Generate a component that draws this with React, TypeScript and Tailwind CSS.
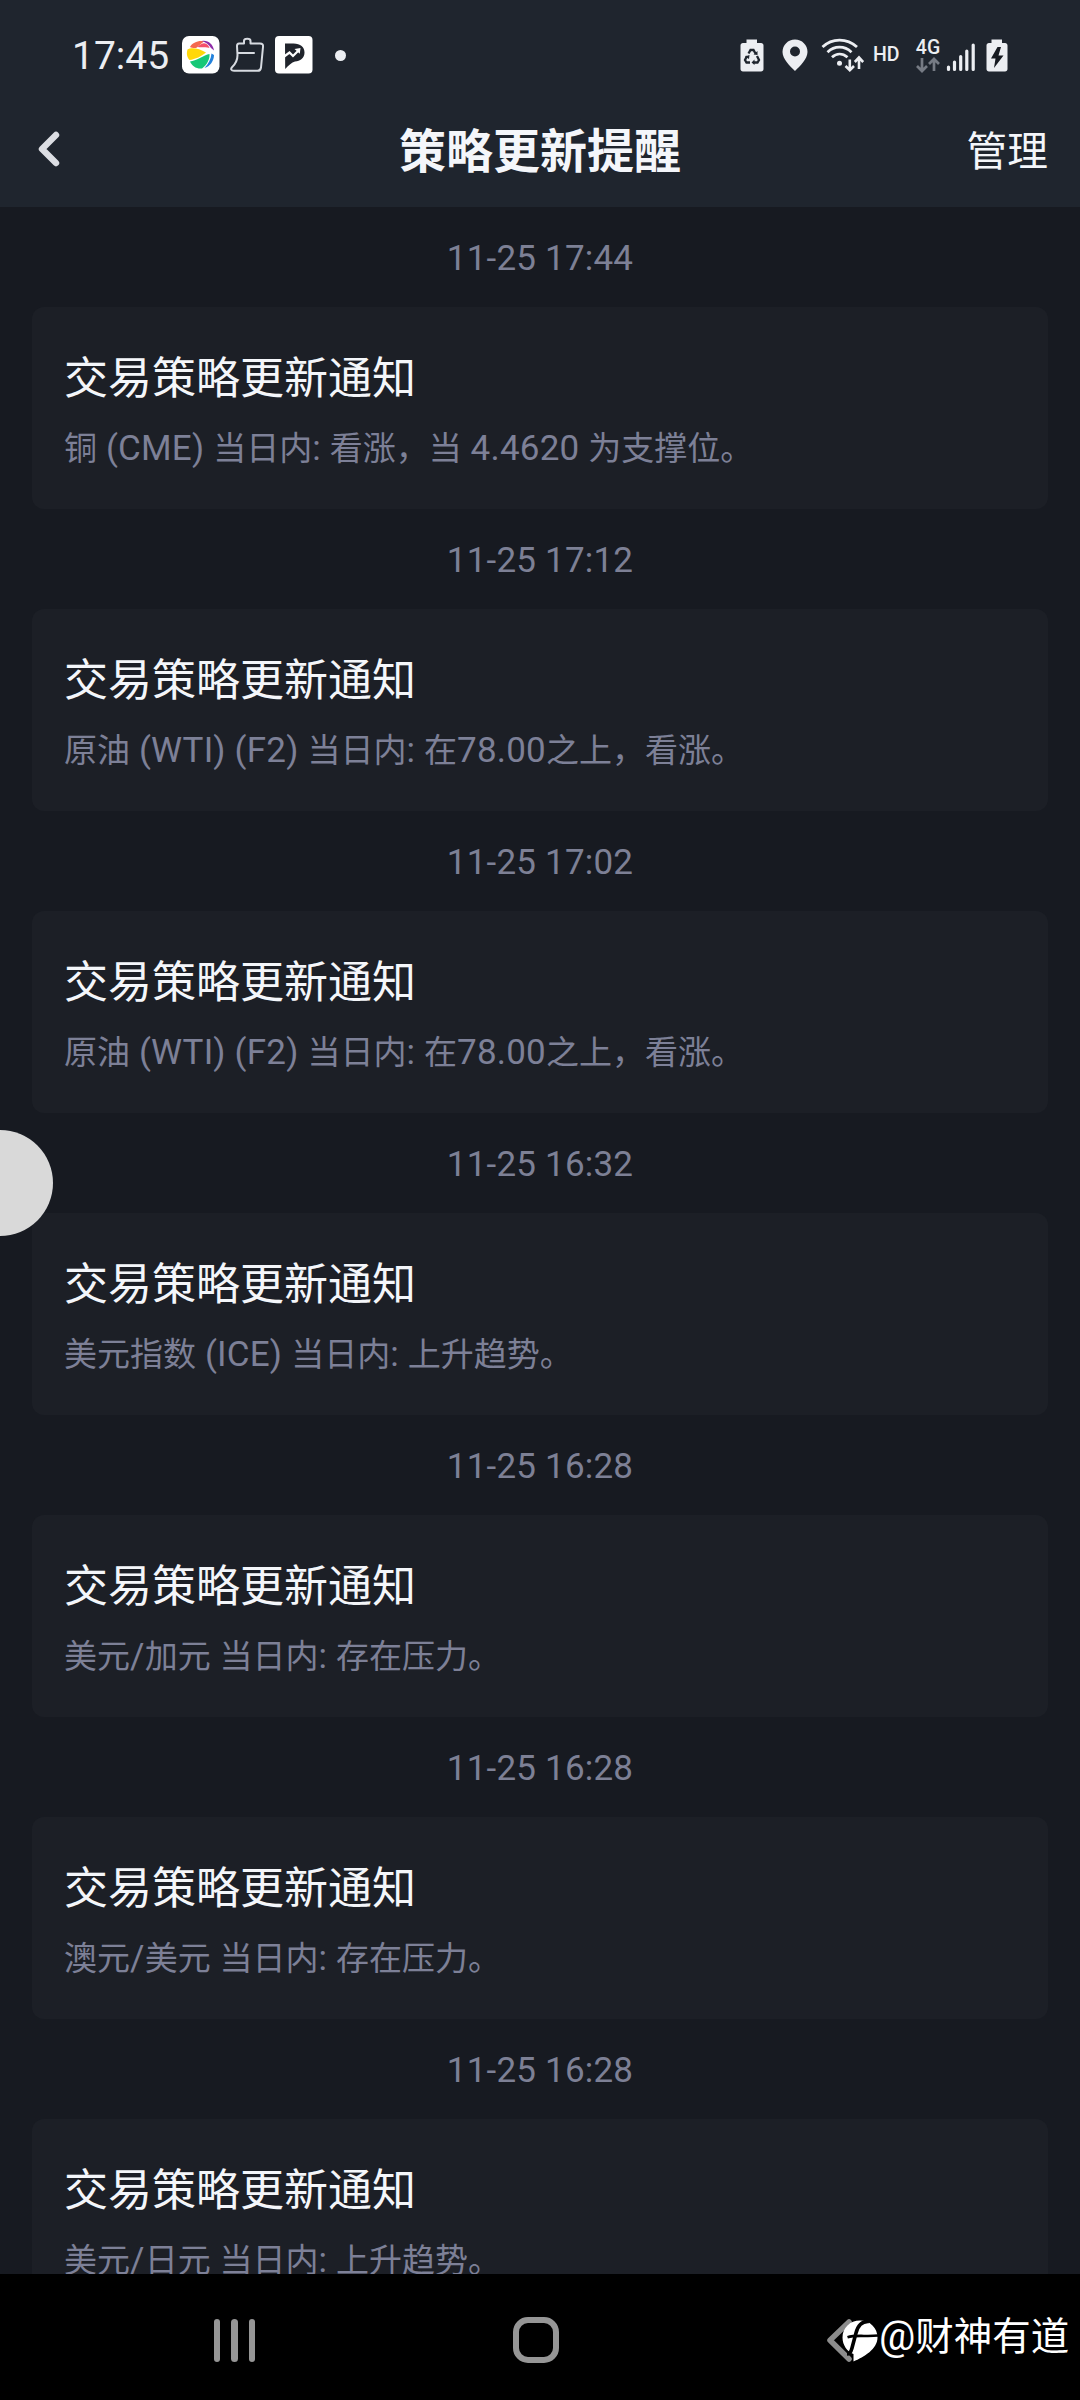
import React from 'react';

type Notice = { time: string; text: string };

const notices: Notice[] = [
  { time: '11-25 17:44', text: '铜 (CME) 当日内: 看涨，当 4.4620 为支撑位。' },
  { time: '11-25 17:12', text: '原油 (WTI) (F2) 当日内: 在78.00之上，看涨。' },
  { time: '11-25 17:02', text: '原油 (WTI) (F2) 当日内: 在78.00之上，看涨。' },
  { time: '11-25 16:32', text: '美元指数 (ICE) 当日内: 上升趋势。' },
  { time: '11-25 16:28', text: '美元/加元 当日内: 存在压力。' },
  { time: '11-25 16:28', text: '澳元/美元 当日内: 存在压力。' },
  { time: '11-25 16:28', text: '美元/日元 当日内: 上升趋势。' },
];

/* Latin runs are set slightly larger than the Chinese characters around them. */
function MixedText({ text }: { text: string }) {
  const runs = text.match(/[\x20-\x7e]+|[^\x20-\x7e]+/g) ?? [];
  return (
    <>
      {runs.map((run, i) =>
        /^[\x20-\x7e]/.test(run) ? (
          <span key={i} className="text-[35px] tracking-[0.2px]">{run}</span>
        ) : (
          <span key={i}>{run}</span>
        ),
      )}
    </>
  );
}

function StatusBar() {
  return (
    <div className="flex h-[110px] items-center pl-[72px] pr-[72px] text-[#eceef2]">
      <span className="w-[110px] pt-[3px] text-[39px] leading-none">17:45</span>
      <svg className="h-[38px] w-[38px] shrink-0" viewBox="0 0 38 38">
        <rect x="0" y="0" width="37.5" height="37.5" rx="7" fill="#fff" />
        <path d="M8 11C10 7 17 4 22 5.500C20 7 17 9 15 11.500C13 12.500 10 12 8 11Z" fill="#f4694f" />
        <path d="M20 5C26 4 31 8 32 14.500L29 12C27 8.500 24 6.500 20 5Z" fill="#8f2da8" />
        <path d="M15.500 11C19 7 22.500 6.500 24.500 8C26 9 27 10.500 27.500 12C24 10.500 20 12 15.500 11Z" fill="#f5506b" />
        <path d="M5.500 13.500C9 11 17 12 24 16.500C20 20 13 23.500 7.500 24C4.500 21 4.500 17 5.500 13.500Z" fill="#ffd80a" />
        <path d="M8 25.500C14 25 22 19 27.500 18C28 23 25 29 20 32.500C14 33 10 30 8 25.500Z" fill="#17c877" />
        <path d="M29.500 17.500L32 19C32 25 28 30.500 22.500 32C26.500 28 29 23 29.500 17.500Z" fill="#2382dc" />
      </svg>
      <svg className="ml-[10px] h-[38px] w-[36px] shrink-0" viewBox="0 0 36 38" fill="none" stroke="#d7dbe1" strokeWidth="2" strokeLinejoin="round" strokeLinecap="round">
        <path d="M9 7.500H14V5C14 2 20.500 2 20.500 5V7.500H30C32.500 7.500 33.300 8.500 33 11L31 31.500C30.700 33.800 29.800 34.800 27.500 34.800H4C1 34.800.500 32.800 2 31.200C5.500 28 7.500 24 7.500 19L7 10C7 8.300 7.500 7.500 9 7.500Z" />
        <path d="M8 17H24" />
      </svg>
      <svg className="ml-[9px] h-[38px] w-[38px] shrink-0" viewBox="0 0 38 38">
        <rect x="0" y="0" width="37.500" height="37.500" rx="4" fill="#fff" />
        <path d="M10 7.500H18.500C25.500 7.500 29.500 11 29.500 16.500C29.500 22.500 25 25 20 25.500C16.500 26.500 14 29 10.200 33Z" fill="#20242c" />
        <path d="M8.500 21L14.500 16.500L18 20L23.500 14.500" fill="none" stroke="#fff" strokeWidth="2.200" />
        <path d="M19.500 13L25.500 12L24.800 17.800Z" fill="#fff" />
      </svg>
      <span className="ml-[22px] size-[11px] rounded-full bg-[#eceef2]" />

      <div className="ml-auto flex items-center">
        <svg className="h-[34px] w-[24px]" viewBox="0 0 24 34" fill="#eceef2">
          <path d="M6.500 1.500H17V5H21C22.500 5 23.500 6 23.500 7.500V31C23.500 32.500 22.500 33.500 21 33.500H3C1.500 33.500.5 32.500.5 31V7.500C.5 6 1.500 5 3 5H6.500Z" />
          <g fill="none" stroke="#1f252e" strokeWidth="2.300">
            <path d="M8.500 15.500L10.500 12H13.500L15.500 15.500" />
            <path d="M17 18L19 22L17.500 24.500H14" />
            <path d="M10 24.500H6.500L5 22L7 18" />
          </g>
          <path d="M13.500 16.500L17.500 17L17.500 13Z M5 18.500L9.500 17L9 21Z M14.500 21.500V27L11.500 24.500Z" fill="#1f252e" />
        </svg>
        <svg className="ml-[18px] h-[34px] w-[26px]" viewBox="0 0 26 34" fill="#eceef2">
          <path fillRule="evenodd" d="M13 1.500C6 1.500.5 7 .5 14C.5 21 8 28 13 33C18 28 25.500 21 25.500 14C25.500 7 20 1.500 13 1.500ZM13 8.500A5 5 0 1 1 13 18.500A5 5 0 1 1 13 8.500Z" />
        </svg>
        <svg className="ml-[13px] h-[34px] w-[43px]" viewBox="0 0 43 34" fill="none" stroke="#eceef2" strokeWidth="2.800">
          <path d="M1.500 9C11 -.3 26 -.3 36 9" />
          <path d="M6.500 14.200C13.500 7.500 23.500 7.500 30.500 14.200" />
          <path d="M11 19.200C15.500 15 21.500 15 26.500 19.200" />
          <circle cx="18.500" cy="25.200" r="2.500" fill="#eceef2" stroke="none" />
          <path d="M28.800 21.500V32M24.500 28L28.800 32.200L33 28M38 31V20M33.800 24L38 19.500L42.200 24" strokeWidth="2.600" />
        </svg>
        <span className="ml-[9px] w-[28px] text-[19.5px] font-medium leading-none">HD</span>
        <div className="ml-[14px] flex w-[26px] flex-col items-center pt-px">
          <span className="text-[19.5px] font-medium leading-[18px]">4G</span>
          <svg className="h-[16px] w-[24px]" viewBox="0 0 24 16" fill="none" stroke="#767b84" strokeWidth="2.700">
            <path d="M6 1V14M1 9L6 14L11 9M18 14V2M13 7L18 2L23 7" />
          </svg>
        </div>
        <svg className="ml-[5px] h-[34px] w-[30px]" viewBox="0 0 30 34" stroke="#eceef2" strokeWidth="3.200" strokeLinecap="round">
          <path d="M2.500 29V31.500M8.500 24V31.500M14.700 18.500V31.500M20.800 13V31.500M27.200 7V31.500" />
        </svg>
        <svg className="ml-[10px] h-[34px] w-[22px]" viewBox="0 0 22 34" fill="#eceef2">
          <path d="M5.500 1.500H16V5H19C20.500 5 21.500 6 21.500 7.500V31C21.500 32.500 20.500 33.500 19 33.500H3C1.500 33.500.5 32.500.5 31V7.500C.5 6 1.500 5 3 5H5.500Z" />
          <path d="M11.500 9L5 20.500H9.500L8 30L17.500 17.500H12.500L15 9Z" fill="#171b22" />
        </svg>
      </div>
    </div>
  );
}

function TitleBar() {
  return (
    <div className="grid h-[97px] grid-cols-[1fr_auto_1fr] items-center px-8 pb-[14px] text-[#f4f6fa]">
      <svg className="mb-[6px] ml-[5px] h-[38px] w-[24px]" viewBox="0 0 24 38" fill="none" stroke="#dcdee3" strokeWidth="6.400" strokeLinecap="round" strokeLinejoin="round">
        <path d="M19 5L5 19L19 33" />
      </svg>
      <h1 className="text-[47px] font-bold leading-[60px]">策略更新提醒</h1>
      <span className="justify-self-end text-[40.7px] leading-[60px]">管理</span>
    </div>
  );
}

function NoticeItem({ time, text }: Notice) {
  return (
    <li className="h-[302px] shrink-0 px-8">
      <div className="flex h-[100px] items-center justify-center pt-[5px] text-[35px] tracking-[0.2px] text-[#7d8095]">{time}</div>
      <article className="flex h-[202px] flex-col rounded-xl bg-[#1c1f26] px-8 pt-10">
        <h2 className="text-[44px] leading-[64px] text-[#f4f6fa]">交易策略更新通知</h2>
        <p className="mt-[14px] whitespace-nowrap text-[33px] leading-[48px] text-[#7d8097]">
          <MixedText text={text} />
        </p>
      </article>
    </li>
  );
}

function NavBar() {
  return (
    <nav className="flex h-[126px] shrink-0 items-start bg-black pt-[43px]">
      <div className="ml-[214px] flex gap-[11px] pt-[2px]">
        <i className="h-[43px] w-[6.3px] rounded-full bg-[#969696]" />
        <i className="h-[43px] w-[6.3px] rounded-full bg-[#969696]" />
        <i className="h-[43px] w-[6.3px] rounded-full bg-[#969696]" />
      </div>
      <div className="ml-[258.5px] size-[46px] rounded-[15px] border-[6px] border-[#969696]" />
      <svg className="ml-[265.5px] h-[48px] w-[53px] shrink-0" viewBox="0 0 53 48">
        <path d="M24 5L5 23.300L24 42" fill="none" stroke="#8c8c8c" strokeWidth="5.500" strokeLinecap="round" strokeLinejoin="round" />
        <path d="M35 3.500C25 3.500 17.500 11 17.500 20.500C17.500 28 22 34.500 28.500 37L28.500 44.500C39 40 52.500 32 52.500 20.500C52.500 11 45 3.500 35 3.500Z" fill="#fff" />
        <path d="M44 4.500C37 4 33 8 31 16L27 31C26 35 24 37 22 37" fill="none" stroke="#000" strokeWidth="3.600" />
        <path d="M22.500 20.300C31 17.500 42 20 53 18.500" fill="none" stroke="#000" strokeWidth="2.600" />
      </svg>
      <span className="-mt-px ml-px whitespace-nowrap text-[38.5px] leading-[40px] text-white"><span className="text-[40.5px]">@</span>财神有道</span>
    </nav>
  );
}

export default function App() {
  return (
    <div
      lang="zh-CN"
      className="relative flex h-[2400px] w-[1080px] flex-col overflow-hidden bg-[#171a21] font-[Roboto,'Noto_Sans_CJK_SC',sans-serif]"
    >
      <header className="h-[207px] shrink-0 bg-[#1f252e]">
        <StatusBar />
        <TitleBar />
      </header>
      <ul className="flex min-h-0 flex-1 flex-col overflow-hidden">
        {notices.map((notice, i) => (
          <NoticeItem key={i} {...notice} />
        ))}
      </ul>
      <NavBar />
      <button
        aria-label="悬浮球"
        className="absolute left-[-53px] top-[1129.5px] size-[106px] rounded-full bg-[#d9d9d9]"
      />
    </div>
  );
}
